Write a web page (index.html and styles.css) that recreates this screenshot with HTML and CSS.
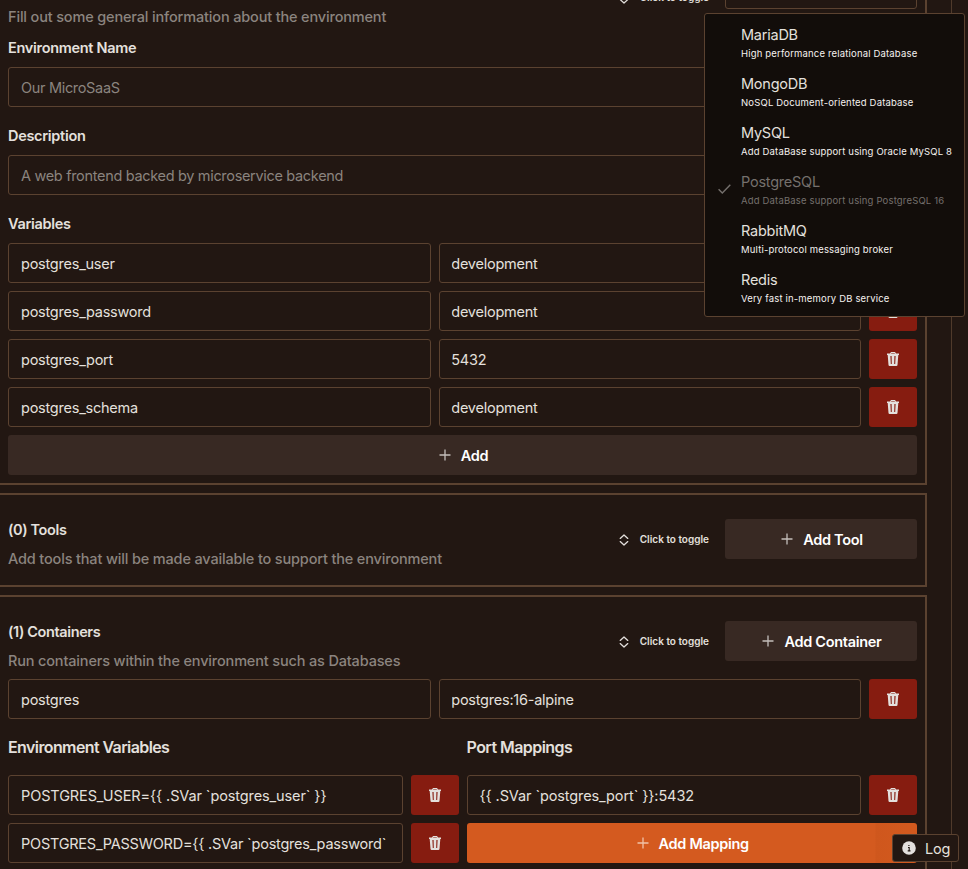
FILE: index.html
```html
<!DOCTYPE html>
<html lang="en">
<head>
<meta charset="utf-8">
<title>Environment</title>
<link rel="stylesheet" href="styles.css">
</head>
<body>
<svg class="defs" aria-hidden="true">
  <symbol id="trash" viewBox="0 0 12 14"><path fill="currentColor" fill-rule="evenodd" d="M4 0h4l1 1.6h3v1.5h-.7L10.500 13q-.1 1-1.100 1H2.600q-1 0-1.100-1L.7 3.100H0V1.600h3zM4.400 1l-.4.600h4L7.600 1zM3.400 4l.4 8h1L4.600 4zM7.400 4l-.2 8h1l.4-8z"/></symbol>
  <symbol id="plus" viewBox="0 0 12 12"><path fill="none" stroke="currentColor" stroke-width="1.3" d="M6 .5v11M.5 6h11"/></symbol>
  <symbol id="updown" viewBox="0 0 10 12"><path fill="none" stroke="currentColor" stroke-width="1.3" stroke-linecap="round" stroke-linejoin="round" d="M1.200 4.400 5 .9l3.800 3.500M1.200 7.600 5 11.100l3.800-3.500"/></symbol>
</svg>
<main class="page">
  <section class="card">
    <header class="head">
      <div class="titles"><p>Fill out some general information about the environment</p></div>
      <button class="toggle"><svg><use href="#updown"/></svg>Click to toggle</button>
      <div class="select"></div>
    </header>
    <label>Environment Name</label>
    <div class="input ph">Our MicroSaaS</div>
    <label class="next">Description</label>
    <div class="input ph">A web frontend backed by microservice backend</div>
    <label class="next">Variables</label>
    <div class="rows">
      <div class="row"><div class="input">postgres_user</div><div class="input">development</div><button class="del"><svg><use href="#trash"/></svg></button></div>
      <div class="row"><div class="input">postgres_password</div><div class="input">development</div><button class="del"><svg><use href="#trash"/></svg></button></div>
      <div class="row"><div class="input">postgres_port</div><div class="input">5432</div><button class="del"><svg><use href="#trash"/></svg></button></div>
      <div class="row"><div class="input">postgres_schema</div><div class="input">development</div><button class="del"><svg><use href="#trash"/></svg></button></div>
      <button class="btn"><svg><use href="#plus"/></svg>Add</button>
    </div>
  </section>
  <section class="card">
    <header class="head">
      <div class="titles"><h2>(0) Tools</h2><p>Add tools that will be made available to support the environment</p></div>
      <button class="toggle"><svg><use href="#updown"/></svg>Click to toggle</button>
      <button class="btn wide"><svg><use href="#plus"/></svg>Add Tool</button>
    </header>
  </section>
  <section class="card">
    <header class="head">
      <div class="titles"><h2>(1) Containers</h2><p>Run containers within the environment such as Databases</p></div>
      <button class="toggle"><svg><use href="#updown"/></svg>Click to toggle</button>
      <button class="btn wide"><svg><use href="#plus"/></svg>Add Container</button>
    </header>
    <div class="row"><div class="input">postgres</div><div class="input">postgres:16-alpine</div><button class="del"><svg><use href="#trash"/></svg></button></div>
    <div class="cols">
      <div class="rows">
        <h3>Environment Variables</h3>
        <div class="row"><div class="input expr">POSTGRES_USER={{ .SVar `postgres_user` }}</div><button class="del"><svg><use href="#trash"/></svg></button></div>
        <div class="row"><div class="input long">POSTGRES_PASSWORD={{ .SVar `postgres_password` }}</div><button class="del"><svg><use href="#trash"/></svg></button></div>
      </div>
      <div class="rows">
        <h3 class="ports">Port Mappings</h3>
        <div class="row"><div class="input expr">{{ .SVar `postgres_port` }}:5432</div><button class="del"><svg><use href="#trash"/></svg></button></div>
        <button class="btn primary"><svg><use href="#plus"/></svg>Add Mapping</button>
      </div>
    </div>
  </section>
</main>
<ul class="menu">
  <li><b>MariaDB</b><small>High performance relational Database</small></li>
  <li><b>MongoDB</b><small>NoSQL Document-oriented Database</small></li>
  <li><b>MySQL</b><small>Add DataBase support using Oracle MySQL 8</small></li>
  <li class="off"><svg class="check" viewBox="0 0 13 10"><path fill="none" stroke="currentColor" stroke-width="1.4" d="M.6 5.300 4.300 9 12.300.8"/></svg><b>PostgreSQL</b><small>Add DataBase support using PostgreSQL 16</small></li>
  <li><b>RabbitMQ</b><small>Multi-protocol messaging broker</small></li>
  <li><b>Redis</b><small>Very fast in-memory DB service</small></li>
</ul>
<button class="log"><svg viewBox="0 0 14 14"><circle cx="7" cy="7" r="6.800" fill="currentColor"/><path fill="none" stroke="#211712" stroke-width="1.100" d="M6 6.500h1.200v3.300M5.700 9.900h2.800M6.300 4.500h1.200"/></svg>Log</button>
</body>
</html>
```
FILE: styles.css
```css
* { box-sizing: border-box; margin: 0; padding: 0; }
body {
  height: 869px;
  overflow: hidden;
  background: #221712;
  color: #e4e0dd;
  font-family: Inter, "Liberation Sans", sans-serif;
  font-size: 14.5px;
  letter-spacing: -0.24px;
}
button { font: inherit; letter-spacing: inherit; color: inherit; background: none; border: 0; }
.defs { display: none; }
.page {
  width: 952px;
  height: 918px;
  margin-top: -49px;
  overflow: hidden;
  border-right: 1px solid #503a2b;
  display: flex;
  flex-direction: column;
  gap: 8px;
}
.card { flex: none; width: 929px; margin-left: -2px; padding: 8px; border: 2px solid #5b4230; }
.head { display: flex; align-items: center; height: 72px; margin-bottom: 2px; }
.titles { flex: 1; align-self: flex-end; padding-bottom: 4px; }
.titles h2 { font-size: 14.5px; font-weight: 600; line-height: 24px; letter-spacing: -0.38px; }
.titles p { margin-top: 5px; line-height: 24px; font-weight: 500; letter-spacing: -0.16px; color: #8b847f; }
.toggle { display: flex; align-items: center; gap: 11px; margin-right: 16px; font-size: 10px; font-weight: 600; letter-spacing: 0; }
.toggle svg { width: 10px; height: 12px; position: relative; top: 1px; }
.select { width: 192px; height: 24px; border: 1px solid #5b4230; border-radius: 3px; }
label { display: block; height: 32px; line-height: 26px; font-weight: 600; letter-spacing: -0.3px; }
.next { margin-top: 16px; }
.input {
  flex: 1 1 0;
  min-width: 0;
  height: 40px;
  padding: 0 12px;
  border: 1px solid #5b4230;
  border-radius: 3px;
  line-height: 40px;
  white-space: nowrap;
  overflow: clip;
  overflow-clip-margin: content-box;
}
.row > .input + .input { padding-left: 11.5px; }
.ph { color: #8b847f; letter-spacing: -0.32px; }
.expr { letter-spacing: -0.11px; }
.long { letter-spacing: -0.23px; }
.rows { display: flex; flex-direction: column; gap: 8px; }
.row { display: flex; gap: 8px; }
.del { display: flex; align-items: center; justify-content: center; width: 48px; height: 40px; background: #861c10; border-radius: 3px; }
.del svg { width: 12px; height: 14px; }
.btn { display: flex; align-items: center; justify-content: center; gap: 10px; height: 40px; padding-left: 2px; background: #382923; border-radius: 3px; color: #fff; font-weight: 600; letter-spacing: -0.3px; }
.btn svg { width: 12px; height: 12px; color: #c3bebb; }
.wide { width: 192px; }
.primary { background: linear-gradient(90deg, #d45a1f 408px, #cf571d 409px, #d2591e 440px); }
.primary svg { color: #f0c2a8; }
.cols { display: grid; grid-template-columns: 1fr 1fr; gap: 8px; }
.cols > div { min-width: 0; }
h3 { height: 48px; line-height: 56px; font-size: 16px; font-weight: 600; letter-spacing: -0.6px; }
.ports { letter-spacing: -0.55px; }
.menu {
  position: absolute;
  left: 704px;
  top: 13px;
  width: 261px;
  height: 304px;
  padding: 4px 0;
  background: #120d0a;
  border: 1px solid #5b4230;
  border-radius: 3px;
  list-style: none;
}
.menu li { position: relative; height: 49px; padding: 5px 0 0 36px; white-space: nowrap; }
.menu b { display: block; font-weight: 400; line-height: 24px; }
.menu small { display: block; font-size: 9.5px; line-height: 13px; letter-spacing: 0.17px; color: #f5f2f0; }
.menu .off, .menu .off small { color: #75706d; }
.check { position: absolute; left: 12.5px; top: 19px; width: 13px; height: 10px; }
.log {
  position: absolute;
  left: 892px;
  top: 834px;
  width: 67px;
  height: 28px;
  display: flex;
  align-items: center;
  padding-left: 9px;
  gap: 9px;
  background: #221712;
  border: 1px solid #5b4230;
  border-radius: 3px;
}
.log svg { width: 14px; height: 14px; }
```
